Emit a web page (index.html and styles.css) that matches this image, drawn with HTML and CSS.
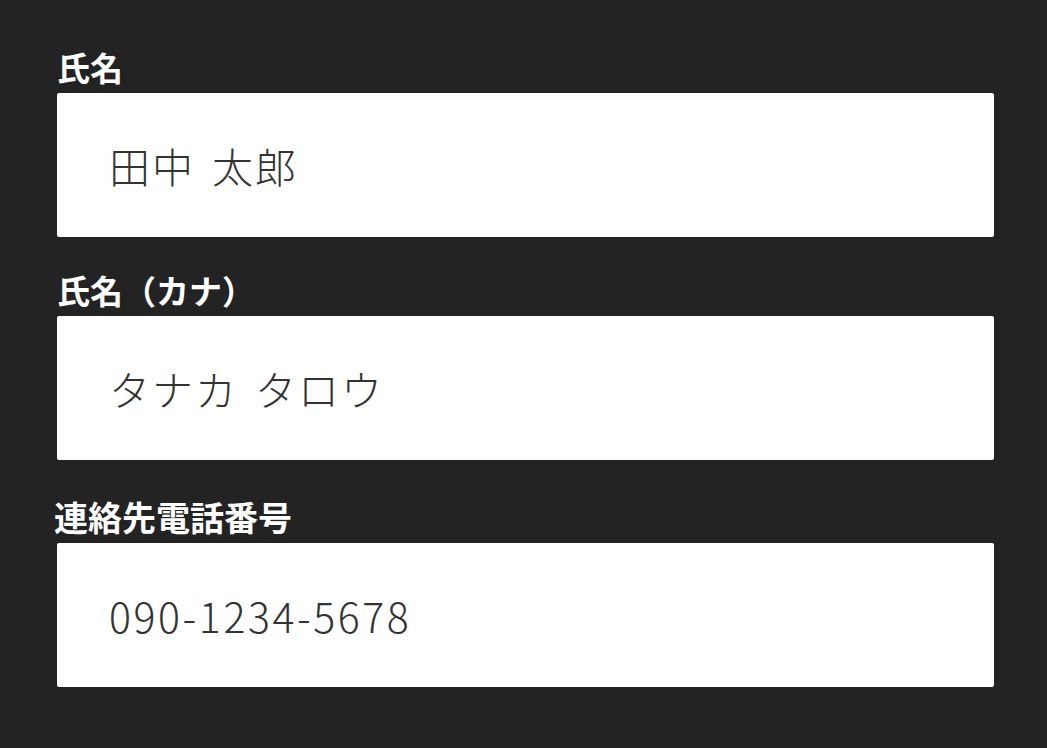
FILE: index.html
```html
<!DOCTYPE html>
<html lang="ja">
<head>
<meta charset="utf-8">
<title>フォーム</title>
<link rel="stylesheet" href="styles.css">
</head>
<body>
<main class="form">
  <div class="field">
    <label class="field-label">氏名</label>
    <div class="field-input">田中 太郎</div>
  </div>
  <div class="field">
    <label class="field-label">氏名（カナ）</label>
    <div class="field-input">タナカ タロウ</div>
  </div>
  <div class="field field-phone">
    <label class="field-label field-label-wide">連絡先電話番号</label>
    <div class="field-input field-input-digits">090-1234-5678</div>
  </div>
</main>
</body>
</html>
```
FILE: styles.css
```css
html, body {
  margin: 0;
  padding: 0;
  background: #232323;
}
body {
  font-family: "Noto Sans CJK JP", "Noto Sans", sans-serif;
  width: 1047px;
  height: 748px;
  overflow: hidden;
}
.form {
  display: flex;
  flex-direction: column;
  gap: 31px;
  padding: 45px 53px 0 57px;
}
.field {
  display: flex;
  flex-direction: column;
}
.field-phone {
  margin-top: 4px;
}
.field-label {
  display: block;
  color: #ffffff;
  font-size: 33px;
  font-weight: 700;
  line-height: 44px;
  height: 44px;
  padding-bottom: 4px;
}
.field-label-wide {
  margin-left: -3px;
  font-size: 34px;
}
.field-input {
  height: 144px;
  box-sizing: border-box;
  background: #ffffff;
  border-radius: 2px;
  padding: 0 0 0 52px;
  display: flex;
  align-items: center;
  color: #333333;
  font-size: 41px;
  font-weight: 300;
  letter-spacing: 2px;
  word-spacing: 6px;
}
.field-input-digits {
  letter-spacing: 2.6px;
}
```
